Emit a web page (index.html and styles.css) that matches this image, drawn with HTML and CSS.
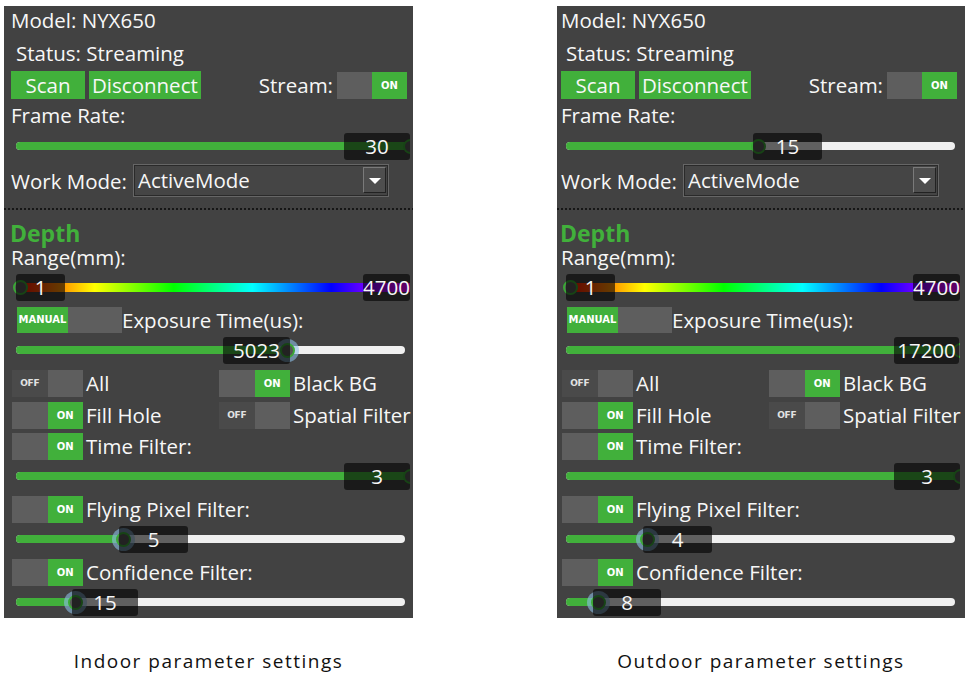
FILE: index.html
```html
<!DOCTYPE html>
<html lang="en">
<head>
    <meta charset="UTF-8">
    <title>Parameter settings</title>
    <link rel="stylesheet" href="styles.css">
</head>
<body>
<div class="page">
    <div class="shot indoor">
        <div class="panel">
            <div class="section">
                <div class="model">Model: NYX650</div>
                <div class="status">Status: Streaming</div>
                <div class="actions">
                    <span class="btn scan">Scan</span>
                    <span class="btn">Disconnect</span>
                    <div class="stream">
                        <span>Stream:</span>
                        <span class="toggle on"><em></em><em>ON</em></span>
                    </div>
                </div>
                <div class="label frame">Frame Rate:</div>
                <div class="slider">
                    <i class="track"></i>
                    <i class="fill" style="width: 394px"></i>
                    <i class="thumb" style="left: 399px"></i>
                    <b class="value" style="left: 333px; width: 66px">30</b>
                </div>
                <div class="work">
                    <span class="work-label">Work Mode:</span>
                    <div class="combo">ActiveMode<i class="drop"></i></div>
                </div>
            </div>
            <div class="divider"></div>
            <div class="section">
                <div class="depth">Depth</div>
                <div class="label range-label">Range(mm):</div>
                <div class="slider range">
                    <i class="track rainbow"></i>
                    <i class="thumb" style="left: 9px"></i>
                    <b class="value" style="left: 5px; width: 49px">1</b>
                    <b class="value" style="left: 352px; width: 47px">4700</b>
                </div>
                <div class="manual-row">
                    <span class="toggle manual"><em>MANUAL</em><em></em></span>
                    <span>Exposure Time(us):</span>
                </div>
                <div class="slider">
                    <i class="track"></i>
                    <i class="fill" style="width: 271px"></i>
                    <i class="thumb focus" style="left: 276px"></i>
                    <b class="value" style="left: 212px; width: 67px">5023</b>
                </div>
                <div class="toggle-row first">
                    <div class="cell"><span class="toggle off"><em>OFF</em><em></em></span><span>All</span></div>
                    <div class="cell"><span class="toggle on"><em></em><em>ON</em></span><span>Black BG</span></div>
                </div>
                <div class="toggle-row second">
                    <div class="cell"><span class="toggle on"><em></em><em>ON</em></span><span>Fill Hole</span></div>
                    <div class="cell"><span class="toggle off"><em>OFF</em><em></em></span><span>Spatial Filter</span></div>
                </div>
                <div class="toggle-row">
                    <div class="cell"><span class="toggle on"><em></em><em>ON</em></span><span>Time Filter:</span></div>
                </div>
                <div class="slider">
                    <i class="track"></i>
                    <i class="fill" style="width: 394px"></i>
                    <i class="thumb" style="left: 399px"></i>
                    <b class="value" style="left: 333px; width: 66px">3</b>
                </div>
                <div class="toggle-row">
                    <div class="cell"><span class="toggle on"><em></em><em>ON</em></span><span>Flying Pixel Filter:</span></div>
                </div>
                <div class="slider">
                    <i class="track"></i>
                    <i class="fill" style="width: 107px"></i>
                    <i class="thumb focus" style="left: 112px"></i>
                    <b class="value" style="left: 108px; width: 69px">5</b>
                </div>
                <div class="toggle-row">
                    <div class="cell"><span class="toggle on"><em></em><em>ON</em></span><span>Confidence Filter:</span></div>
                </div>
                <div class="slider">
                    <i class="track"></i>
                    <i class="fill" style="width: 59px"></i>
                    <i class="thumb focus" style="left: 64px"></i>
                    <b class="value" style="left: 61px; width: 66px">15</b>
                </div>
            </div>
        </div>
        <p class="caption">Indoor parameter settings</p>
    </div>

    <div class="shot outdoor">
        <div class="panel">
            <div class="section">
                <div class="model">Model: NYX650</div>
                <div class="status">Status: Streaming</div>
                <div class="actions">
                    <span class="btn scan">Scan</span>
                    <span class="btn">Disconnect</span>
                    <div class="stream">
                        <span>Stream:</span>
                        <span class="toggle on"><em></em><em>ON</em></span>
                    </div>
                </div>
                <div class="label frame">Frame Rate:</div>
                <div class="slider">
                    <i class="track"></i>
                    <i class="fill" style="width: 192px"></i>
                    <i class="thumb" style="left: 197px"></i>
                    <b class="value" style="left: 192px; width: 69px">15</b>
                </div>
                <div class="work">
                    <span class="work-label">Work Mode:</span>
                    <div class="combo">ActiveMode<i class="drop"></i></div>
                </div>
            </div>
            <div class="divider"></div>
            <div class="section">
                <div class="depth">Depth</div>
                <div class="label range-label">Range(mm):</div>
                <div class="slider range">
                    <i class="track rainbow"></i>
                    <i class="thumb" style="left: 9px"></i>
                    <b class="value" style="left: 5px; width: 49px">1</b>
                    <b class="value" style="left: 352px; width: 47px">4700</b>
                </div>
                <div class="manual-row">
                    <span class="toggle manual"><em>MANUAL</em><em></em></span>
                    <span>Exposure Time(us):</span>
                </div>
                <div class="slider">
                    <i class="track"></i>
                    <i class="fill" style="width: 394px"></i>
                    <i class="thumb" style="left: 399px"></i>
                    <b class="value" style="left: 333px; width: 65px">17200</b>
                </div>
                <div class="toggle-row first">
                    <div class="cell"><span class="toggle off"><em>OFF</em><em></em></span><span>All</span></div>
                    <div class="cell"><span class="toggle on"><em></em><em>ON</em></span><span>Black BG</span></div>
                </div>
                <div class="toggle-row second">
                    <div class="cell"><span class="toggle on"><em></em><em>ON</em></span><span>Fill Hole</span></div>
                    <div class="cell"><span class="toggle off"><em>OFF</em><em></em></span><span>Spatial Filter</span></div>
                </div>
                <div class="toggle-row">
                    <div class="cell"><span class="toggle on"><em></em><em>ON</em></span><span>Time Filter:</span></div>
                </div>
                <div class="slider">
                    <i class="track"></i>
                    <i class="fill" style="width: 394px"></i>
                    <i class="thumb" style="left: 399px"></i>
                    <b class="value" style="left: 333px; width: 66px">3</b>
                </div>
                <div class="toggle-row">
                    <div class="cell"><span class="toggle on"><em></em><em>ON</em></span><span>Flying Pixel Filter:</span></div>
                </div>
                <div class="slider">
                    <i class="track"></i>
                    <i class="fill" style="width: 81px"></i>
                    <i class="thumb focus" style="left: 86px"></i>
                    <b class="value" style="left: 82px; width: 69px">4</b>
                </div>
                <div class="toggle-row">
                    <div class="cell"><span class="toggle on"><em></em><em>ON</em></span><span>Confidence Filter:</span></div>
                </div>
                <div class="slider">
                    <i class="track"></i>
                    <i class="fill" style="width: 32px"></i>
                    <i class="thumb focus" style="left: 37px"></i>
                    <b class="value" style="left: 32px; width: 68px">8</b>
                </div>
            </div>
        </div>
        <p class="caption">Outdoor parameter settings</p>
    </div>
</div>
</body>
</html>
```

FILE: styles.css
```css
* {
    margin: 0;
    padding: 0;
    box-sizing: border-box;
}

body {
    background: #fff;
    font-family: "Open Sans", "Noto Sans", sans-serif;
}

.page {
    display: flex;
    gap: 144px;
    padding: 6px 0 0 4px;
}

.indoor {
    width: 409px;
}

.outdoor {
    width: 408px;
}

/* panel */

.panel {
    background: #424242;
    color: #f7f7f7;
    font-size: 20.5px;
    padding-bottom: 1px;
}

.section {
    padding: 0 3px 0 7px;
}

.outdoor .section {
    padding: 0 5px 0 4px;
}

.model {
    height: 30px;
    line-height: 28px;
}

.status {
    height: 35px;
    line-height: 35px;
    padding-left: 5px;
}

.actions {
    display: flex;
    align-items: center;
    height: 28px;
}

.btn {
    height: 28px;
    line-height: 28px;
    background: #41b03b;
    text-align: center;
    padding: 0 3px;
    margin-right: 4px;
}

.btn.scan {
    width: 74px;
}

.stream {
    display: flex;
    align-items: center;
    gap: 4px;
    margin-left: auto;
    margin-right: 3px;
}

.stream .toggle {
    width: 70px;
}

.label.frame {
    height: 33px;
    line-height: 32px;
}

.work {
    display: flex;
    align-items: center;
    height: 33px;
    margin-top: 3px;
}

.work-label {
    width: 122px;
}

.combo {
    position: relative;
    width: 256px;
    height: 33px;
    line-height: 30px;
    padding-left: 4px;
    background: #454545;
    border: 1px solid #666;
    box-shadow: inset 1px 1px 0 #2a2a2a, inset -1px -1px 0 #2a2a2a;
}

.drop {
    position: absolute;
    right: 2px;
    top: 2px;
    width: 23px;
    height: 26px;
    background: #4e4e4e;
    border-top: 1px solid #7a7a7a;
    border-left: 1px solid #7a7a7a;
    border-right: 1px solid #222;
    border-bottom: 1px solid #222;
}

.drop::after {
    content: "";
    position: absolute;
    left: 5px;
    top: 10px;
    border-left: 6px solid transparent;
    border-right: 6px solid transparent;
    border-top: 6px solid #fff;
}

.divider {
    height: 2px;
    margin-top: 11px;
    background: repeating-linear-gradient(90deg, #161616 0 2px, transparent 2px 4px);
}

.depth {
    margin-top: 11px;
    height: 25px;
    line-height: 25px;
    font-size: 23px;
    font-weight: bold;
    color: #41b03b;
    margin-left: -1px;
}

.label.range-label {
    height: 23px;
    line-height: 22px;
}

/* sliders */

.slider {
    position: relative;
    height: 29px;
    margin-top: 3px;
    overflow: hidden;
}

.label.frame + .slider {
    margin-top: 0;
}

.slider.range {
    margin-top: 4px;
}

.slider i, .slider b {
    position: absolute;
    display: block;
}

.track {
    left: 5px;
    right: 5px;
    top: 10px;
    height: 8px;
    border-radius: 4px;
    background: #f0f0f0;
}

.track.rainbow {
    right: 0;
    top: 10px;
    height: 9px;
    border-radius: 0;
    background: linear-gradient(90deg, #f00, #ff0, #0f0, #0ff, #00f, #f0f);
}

.fill {
    left: 5px;
    top: 10px;
    height: 8px;
    border-radius: 4px;
    background: #41b03b;
}

.thumb {
    top: 14px;
    width: 15px;
    height: 15px;
    margin: -7px 0 0 -7px;
    border-radius: 50%;
    background: #555;
    border: 2px solid #3aa835;
}

.thumb.focus {
    box-shadow: 0 0 0 4px rgba(140, 190, 230, 0.6);
}

.value {
    top: 1px;
    height: 27px;
    line-height: 27px;
    border-radius: 3px;
    background: rgba(0, 0, 0, 0.6);
    text-align: center;
    font-weight: normal;
    white-space: nowrap;
}

/* toggles */

.toggle {
    display: flex;
    width: 71px;
    height: 27px;
    flex: none;
}

.toggle em {
    flex: 1;
    font-style: normal;
    font-family: "DejaVu Sans", sans-serif;
    font-weight: bold;
    font-size: 10px;
    line-height: 27px;
    text-align: center;
    background: #5e5e5e;
    color: #fff;
}

.toggle.on em:last-child {
    background: #41b03b;
}

.toggle.off em:first-child {
    background: #4a4a4a;
    color: #e2e2e2;
    font-size: 9px;
    letter-spacing: -0.3px;
}

.manual-row {
    display: flex;
    align-items: center;
    height: 26px;
    margin-top: 5px;
    padding-left: 6px;
}

.toggle.manual {
    width: 105px;
    height: 26px;
}

.toggle.manual em {
    line-height: 26px;
}

.toggle.manual em:first-child {
    flex: 0 0 51px;
    background: #41b03b;
}

.toggle-row {
    display: grid;
    grid-template-columns: 207px 1fr;
    height: 27px;
    margin-top: 4px;
    padding-left: 1px;
}

.toggle-row.second {
    margin-top: 5px;
}

.cell {
    display: flex;
    align-items: center;
    gap: 3px;
    white-space: nowrap;
}

/* captions */

.caption {
    margin-top: 31px;
    text-align: center;
    font-size: 19px;
    line-height: 24px;
    color: #111;
    letter-spacing: 1.5px;
}
```
